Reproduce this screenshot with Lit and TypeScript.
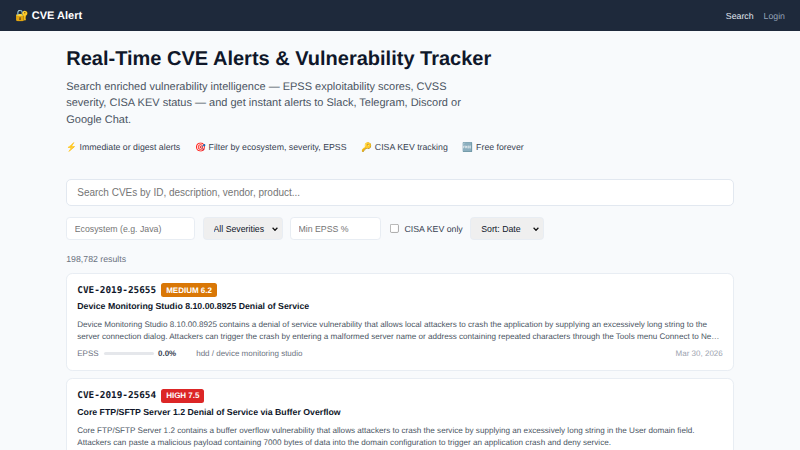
import { LitElement, html, css } from 'lit';
import { customElement } from 'lit/decorators.js';

interface Cve {
  id: string;
  severity: string;
  level: string;
  title: string;
  summary: string;
  epss: string;
  product: string;
  date: string;
}

const CVES: Cve[] = [
  {
    id: 'CVE-2019-25655',
    severity: 'MEDIUM 6.2',
    level: 'medium',
    title: 'Device Monitoring Studio 8.10.00.8925 Denial of Service',
    summary:
      'Device Monitoring Studio 8.10.00.8925 contains a denial of service vulnerability that allows local attackers to crash the application by supplying an excessively long string to the server connection dialog. Attackers can trigger the crash by entering a malformed server name or address containing repeated characters through the Tools menu Connect to Ne…',
    epss: '0.0%',
    product: 'hdd / device monitoring studio',
    date: 'Mar 30, 2026',
  },
  {
    id: 'CVE-2019-25654',
    severity: 'HIGH 7.5',
    level: 'high',
    title: 'Core FTP/SFTP Server 1.2 Denial of Service via Buffer Overflow',
    summary:
      'Core FTP/SFTP Server 1.2 contains a buffer overflow vulnerability that allows attackers to crash the service by supplying an excessively long string in the User domain field. Attackers can paste a malicious payload containing 7000 bytes of data into the domain configuration to trigger an application crash and deny service.',
    epss: '0.0%',
    product: 'coreftp / core ftp',
    date: 'Mar 30, 2026',
  },
];

@customElement('app-root')
export class AppRoot extends LitElement {
  static styles = css`
    :host {
      display: block;
      zoom: 0.625;
      height: 720px;
      overflow: hidden;
      background: #f8fafc;
      color: #0f172a;
      font-family: 'Liberation Sans', Arial, sans-serif;
      font-size: 16px;
      text-rendering: geometricPrecision;
    }

    nav {
      display: flex;
      justify-content: space-between;
      align-items: center;
      height: 50px;
      padding: 0 24px;
      background: #1e293b;
    }

    .logo {
      color: #fff;
      font-size: 17.6px;
      font-weight: 700;
    }

    .links {
      display: flex;
      gap: 16px;
      font-size: 14px;
    }

    .links .active {
      color: #e2e8f0;
    }

    .links .muted {
      color: #94a3b8;
    }

    main {
      max-width: 1068px;
      margin: 0 auto;
    }

    h1 {
      margin: 0;
      padding-top: 24px;
      font-size: 32px;
      line-height: 44px;
      font-weight: 700;
    }

    .lead {
      max-width: 650px;
      margin: 8px 0 0;
      color: #4b5563;
      font-size: 17.6px;
      line-height: 26.4px;
    }

    .chips {
      display: flex;
      gap: 24px;
      margin-top: 18px;
      color: #374151;
      font-size: 14px;
      line-height: 24px;
    }

    .search {
      display: block;
      box-sizing: border-box;
      width: 100%;
      height: 44px;
      margin-top: 39px;
      padding: 0 16px;
      border: 1.5px solid #e2e8f0;
      border-radius: 8px;
      background: #fff;
      font: 16px 'Liberation Sans', Arial, sans-serif;
    }

    .filters {
      display: flex;
      align-items: center;
      gap: 12px;
      margin-top: 17px;
    }

    input::placeholder {
      color: #757575;
    }

    .filters input[type='text'] {
      box-sizing: border-box;
      height: 36px;
      padding: 0 12px;
      border: 1.5px solid #e8edf3;
      border-radius: 6px;
      background: #fff;
      font: 14px 'Liberation Sans', Arial, sans-serif;
    }

    .eco {
      width: 206px;
    }

    .min-epss {
      width: 146px;
    }

    select {
      appearance: none;
      box-sizing: border-box;
      height: 37px;
      padding: 0 12px 0 16px;
      border: 1.5px solid #e8edf3;
      border-radius: 6px;
      background: #efefef
        url("data:image/svg+xml,%3Csvg xmlns='http://www.w3.org/2000/svg' width='10' height='6'%3E%3Cpath d='M1 1l4 4 4-4' fill='none' stroke='%23111' stroke-width='2'/%3E%3C/svg%3E")
        no-repeat right 6px center;
      color: #0f172a;
      font: 14px 'Liberation Sans', Arial, sans-serif;
    }

    .severity {
      width: 128px;
    }

    .sort {
      width: 118px;
    }

    .kev {
      display: flex;
      align-items: center;
      gap: 5px;
      margin-left: 2px;
      color: #374151;
      font-size: 14px;
    }

    .kev input {
      margin: 0 4px 0 0;
      width: 14px;
      height: 14px;
    }

    .count {
      margin: 20px 0 12px;
      color: #6b7280;
      font-size: 14px;
      line-height: 20px;
    }

    .card {
      box-sizing: border-box;
      height: 157px;
      margin-bottom: 12px;
      padding: 15px 16px;
      border: 1px solid #e8edf3;
      border-radius: 10px;
      background: #fff;
    }

    .head {
      display: flex;
      align-items: center;
      gap: 8px;
    }

    .id {
      font-family: 'DejaVu Sans Mono', monospace;
      font-size: 15px;
      font-weight: 700;
    }

    .badge {
      padding: 4px 8px;
      border-radius: 4px;
      color: #fff;
      font-size: 12.8px;
      font-weight: 700;
    }

    .badge.medium {
      background: #d97706;
    }

    .badge.high {
      background: #dc2626;
    }

    h3 {
      margin: 5px 0 8px;
      font-size: 14px;
      line-height: 22px;
      font-weight: 700;
    }

    .summary {
      margin: 0;
      color: #4b5563;
      font-size: 13px;
      line-height: 20.15px;
    }

    .meta {
      display: flex;
      align-items: center;
      margin-top: 8px;
      color: #6b7280;
      font-size: 12.8px;
    }

    .bar {
      width: 80px;
      height: 6px;
      margin: 0 7px 0 8px;
      border-radius: 3px;
      background: #e5e7eb;
    }

    .pct {
      margin-right: 32px;
      color: #374151;
      font-weight: 700;
    }

    .date {
      margin-left: auto;
      color: #9ca3af;
    }
  `;

  renderCard(c: Cve) {
    return html`
      <article class="card">
        <div class="head">
          <span class="id">${c.id}</span>
          <span class="badge ${c.level}">${c.severity}</span>
        </div>
        <h3>${c.title}</h3>
        <p class="summary">${c.summary}</p>
        <div class="meta">
          <span>EPSS</span>
          <span class="bar"></span>
          <span class="pct">${c.epss}</span>
          <span>${c.product}</span>
          <span class="date">${c.date}</span>
        </div>
      </article>
    `;
  }

  render() {
    return html`
      <nav>
        <span class="logo">🔐 CVE Alert</span>
        <div class="links">
          <span class="active">Search</span>
          <span class="muted">Login</span>
        </div>
      </nav>
      <main>
        <h1>Real-Time CVE Alerts &amp; Vulnerability Tracker</h1>
        <p class="lead">
          Search enriched vulnerability intelligence — EPSS exploitability scores, CVSS severity,
          CISA KEV status — and get instant alerts to Slack, Telegram, Discord or Google Chat.
        </p>
        <div class="chips">
          <span>⚡ Immediate or digest alerts</span>
          <span>🎯 Filter by ecosystem, severity, EPSS</span>
          <span>🔑 CISA KEV tracking</span>
          <span>🆓 Free forever</span>
        </div>
        <input class="search" type="text" placeholder="Search CVEs by ID, description, vendor, product..." />
        <div class="filters">
          <input class="eco" type="text" placeholder="Ecosystem (e.g. Java)" />
          <select class="severity"><option>All Severities</option></select>
          <input class="min-epss" type="text" placeholder="Min EPSS %" />
          <label class="kev"><input type="checkbox" />CISA KEV only</label>
          <select class="sort"><option>Sort: Date</option></select>
        </div>
        <div class="count">198,782 results</div>
        ${CVES.map((c) => this.renderCard(c))}
      </main>
    `;
  }
}
